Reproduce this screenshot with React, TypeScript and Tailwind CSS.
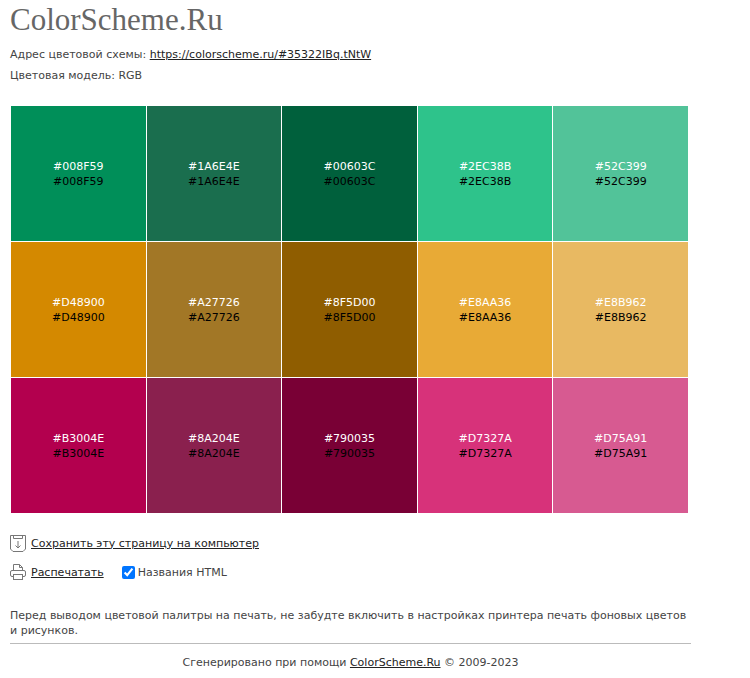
const rows = [
  [
    { hex: "#008F59", bg: "bg-[#008f59]" },
    { hex: "#1A6E4E", bg: "bg-[#1a6e4e]" },
    { hex: "#00603C", bg: "bg-[#00603c]" },
    { hex: "#2EC38B", bg: "bg-[#2ec38b]" },
    { hex: "#52C399", bg: "bg-[#52c399]" },
  ],
  [
    { hex: "#D48900", bg: "bg-[#d48900]" },
    { hex: "#A27726", bg: "bg-[#a27726]" },
    { hex: "#8F5D00", bg: "bg-[#8f5d00]" },
    { hex: "#E8AA36", bg: "bg-[#e8aa36]" },
    { hex: "#E8B962", bg: "bg-[#e8b962]" },
  ],
  [
    { hex: "#B3004E", bg: "bg-[#b3004e]" },
    { hex: "#8A204E", bg: "bg-[#8a204e]" },
    { hex: "#790035", bg: "bg-[#790035]" },
    { hex: "#D7327A", bg: "bg-[#d7327a]" },
    { hex: "#D75A91", bg: "bg-[#d75a91]" },
  ],
];

const SaveIcon = () => (
  <svg width="16" height="18" viewBox="0 0 16 18" fill="none" stroke="#777" strokeWidth="1">
    <path d="M.5 1.5h15v13.5l-2.5 2.5H3L.5 15z" />
    <path d="M3.5 1.5v3h9v-3" />
    <path d="M8 7v7M5.5 11.5 8 14l2.5-2.5" />
  </svg>
);

const PrintIcon = () => (
  <svg width="16" height="16" viewBox="0 0 16 16" fill="none" stroke="#777" strokeWidth="1">
    <path d="M3.5 6.5v-6h6l3 3v3" />
    <path d="M9.5.5v3h3" />
    <rect x=".5" y="6.5" width="15" height="6" rx="1.5" />
    <rect x="3.5" y="10.5" width="9" height="5" fill="#fff" />
  </svg>
);

export default function App() {
  return (
    <div className="min-h-[678px] bg-white pl-[10px] font-['DejaVu_Sans',sans-serif] text-[11px] leading-[15px] text-[#444]">
      <h1 className="pt-[2px] font-['Liberation_Serif',serif] text-[31px] leading-[36px] font-normal text-[#666]">
        ColorScheme.Ru
      </h1>
      <p className="mt-[9px]">
        Адрес цветовой схемы:{" "}
        <a href="#" className="text-[#222] underline">
          https://colorscheme.ru/#35322IBq.tNtW
        </a>
      </p>
      <p className="mt-[6px]">Цветовая модель: RGB</p>

      <div className="mt-[23px] ml-px grid w-[677px] grid-cols-5 gap-px">
        {rows.flat().map((c) => (
          <div
            key={c.hex}
            className={`${c.bg} flex h-[135px] flex-col items-center justify-center text-center`}
          >
            <span className="text-white">{c.hex}</span>
            <span className="text-black">{c.hex}</span>
          </div>
        ))}
      </div>

      <div className="mt-[21px] flex items-center gap-[5px]">
        <SaveIcon />
        <a href="#" className="text-[#222] underline">
          Сохранить эту страницу на компьютер
        </a>
      </div>

      <div className="mt-[12px] flex items-center">
        <PrintIcon />
        <a href="#" className="ml-[5px] text-[#222] underline">
          Распечатать
        </a>
        <input type="checkbox" defaultChecked className="ml-[18px] h-[13px] w-[13px] accent-[#0075ff]" />
        <span className="ml-[3px]">Названия HTML</span>
      </div>

      <p className="mt-[28px] w-[680px]">
        Перед выводом цветовой палитры на печать, не забудте включить в настройках принтера печать фоновых цветов и рисунков.
      </p>
      <div className="mt-[5px] w-[681px] border-t border-[#bbb] pt-[11px] text-center">
        Сгенерировано при помощи{" "}
        <a href="#" className="text-[#222] underline">
          ColorScheme.Ru
        </a>{" "}
        © 2009-2023
      </div>
    </div>
  );
}
